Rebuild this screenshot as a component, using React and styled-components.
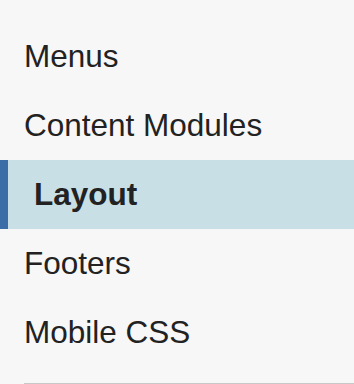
import styled, { createGlobalStyle } from 'styled-components'

const GlobalStyle = createGlobalStyle`
  html, body {
    margin: 0;
    padding: 0;
    background: #f7f7f7;
  }
`

const Nav = styled.nav`
  font-family: "Liberation Sans", Arial, Helvetica, sans-serif;
  background: #f7f7f7;
  padding-top: 22px;
  height: 384px;
  box-sizing: border-box;
`

const List = styled.ul`
  list-style: none;
  margin: 0 0 0 24px;
  padding: 0 0 16px 0;
  border-bottom: 1px solid #c8c8c8;
`

const Item = styled.li`
  height: 69px;
  display: flex;
  align-items: center;
  margin-left: -24px;
  padding-left: ${p => (p.$active ? '26px' : '24px')};
  border-left: ${p => (p.$active ? '8px solid #3b6ea6' : 'none')};
  background: ${p => (p.$active ? '#c9dfe6' : 'transparent')};
  color: #222;
  font-size: 31.5px;
  font-weight: ${p => (p.$active ? 700 : 400)};
  cursor: pointer;
`

const items = ['Menus', 'Content Modules', 'Layout', 'Footers', 'Mobile CSS']

export default function App() {
  return (
    <>
      <GlobalStyle />
      <Nav>
        <List>
          {items.map(label => (
            <Item key={label} $active={label === 'Layout'}>
              {label}
            </Item>
          ))}
        </List>
      </Nav>
    </>
  )
}
